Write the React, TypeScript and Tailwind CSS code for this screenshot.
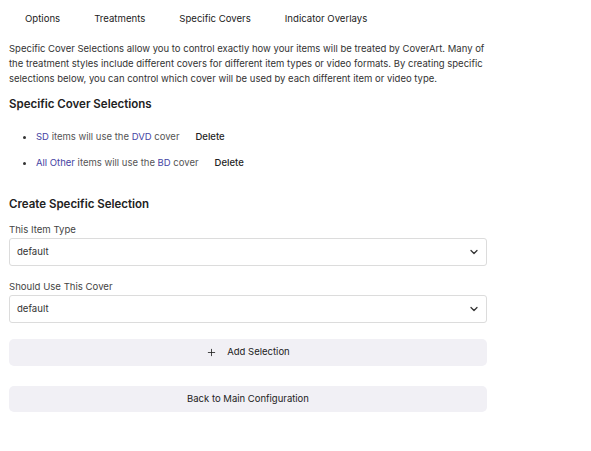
import { ChevronDown, Plus } from "lucide-react";

const TABS = ["Options", "Treatments", "Specific Covers", "Indicator Overlays"];

const SELECTIONS = [
  { item: "SD", cover: "DVD" },
  { item: "All Other", cover: "BD" },
];

function SelectBox({ label }: { label: string }) {
  return (
    <div>
      <p className="text-[9.6px] leading-[14px] text-[#444]">{label}</p>
      <div className="mt-[1px] flex h-[28px] items-center justify-between rounded-[3px] border border-[#dcdcdc] bg-white pl-[7px] pr-[6px]">
        <span className="text-[9.6px] text-[#333]">default</span>
        <ChevronDown className="h-[12px] w-[12px] text-[#333]" strokeWidth={2.5} />
      </div>
    </div>
  );
}

export default function App() {
  return (
    <div className="min-h-[451px] w-[591px] bg-white font-['Inter','Liberation_Sans',sans-serif] text-[#333]">
      <div className="flex h-[39px] items-center gap-[34px] pl-[25px] text-[9.6px] text-[#222]">
        {TABS.map((tab) => (
          <span key={tab}>{tab}</span>
        ))}
      </div>

      <div className="w-[487px] pl-[9px]">
        <p className="mt-[2px] text-[9.5px] leading-[15px] text-[#333]">
          Specific Cover Selections allow you to control exactly how your items will be treated by CoverArt. Many of
          the treatment styles include different covers for different item types or video formats. By creating specific
          selections below, you can control which cover will be used by each different item or video type.
        </p>

        <h2 className="mt-[11px] text-[11.5px] font-semibold leading-[14px] text-[#222]">Specific Cover Selections</h2>

        <ul className="mt-[19px] flex flex-col gap-[12px] pl-[14px]">
          {SELECTIONS.map((s) => (
            <li key={s.item} className="flex items-center text-[9.5px] leading-[14px] text-[#555]">
              <span className="mr-[10px] h-[3px] w-[3px] rounded-full bg-[#333]" />
              <span>
                <span className="text-[#4543a3]">{s.item}</span> items will use the{" "}
                <span className="text-[#4543a3]">{s.cover}</span> cover
              </span>
              <span className="ml-[16px] text-[9.5px] font-medium text-[#222]">Delete</span>
            </li>
          ))}
        </ul>

        <h2 className="mt-[27px] text-[11.5px] font-semibold leading-[14px] text-[#222]">Create Specific Selection</h2>

        <div className="mt-[12px] flex flex-col gap-[14px]">
          <SelectBox label="This Item Type" />
          <SelectBox label="Should Use This Cover" />
        </div>

        <button
          type="button"
          className="mt-[16px] flex h-[27px] w-full items-center justify-center gap-[10px] rounded-[5px] bg-[#f1f0f5] text-[9.5px] text-[#222]"
        >
          <Plus className="h-[11px] w-[11px]" strokeWidth={1.8} />
          Add Selection
        </button>

        <button
          type="button"
          className="mt-[20px] flex h-[26px] w-full items-center justify-center rounded-[5px] bg-[#f1f0f5] text-[9.5px] text-[#222]"
        >
          Back to Main Configuration
        </button>
      </div>
    </div>
  );
}
